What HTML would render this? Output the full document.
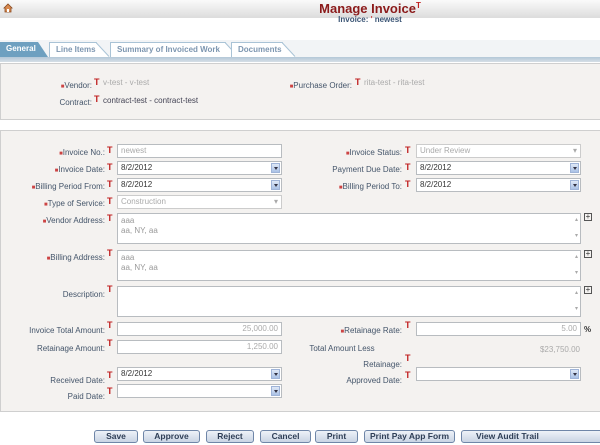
<!DOCTYPE html>
<html><head><style>
*{margin:0;padding:0;box-sizing:border-box}
body{width:600px;height:445px;background:#fff;font-family:"Liberation Sans",Tahoma,sans-serif;font-size:8px;color:#44556a;position:relative;overflow:hidden}
.a{position:absolute}
.hdr{left:0;top:0;width:600px;height:18px;background:linear-gradient(#fafafa,#dcdcdc)}
.title{left:300px;width:140px;top:1px;text-align:center;font-size:13px;font-weight:bold;color:#8b1a1a}
.sub{left:300px;width:140px;top:15px;text-align:center;font-size:8px;font-weight:bold;color:#3b5575}
.tabbar{left:0;top:40px;width:600px;height:17px;background:#f2f4f6}
.tab{top:42px;height:15px;background:#fff;border:1px solid #a9c3d6;border-bottom:none;font-weight:bold;color:#7d96b0;font-size:8px;line-height:13px;padding-left:6px}
.line{left:0;top:57px;width:600px;height:5px;background:linear-gradient(#b4c8d8,#d6dee6)}
.panel{left:0;width:600px;background:#f4f2f0;border:1px solid #cfcfcf;border-right:none}
.lbl{text-align:right;width:110px;font-size:8px;color:#44556a;line-height:10px}
.r{color:#c44;font-size:6px}
.in{height:14px;background:#fff;border:1px solid #b8bcc0;font-size:8px;line-height:12px;padding-left:3px;color:#333}
.g{color:#aaa}
.dd{position:absolute;right:1px;top:1px;width:9px;height:10px;background:linear-gradient(#dfe8f6,#aac2e6);border:1px solid #9fb4d8}
.dd:after{content:"";position:absolute;left:2px;top:3px;border:2px solid transparent;border-top:3px solid #334}
.sdd:after{content:"▾";position:absolute;right:3px;top:0;color:#aaa;font-size:8px}
.ta{height:31px;background:#fff;border:1px solid #b8bcc0;font-size:8px;line-height:10px;padding:2px 3px;color:#999}
.ta:after{content:"▴\A\A▾";white-space:pre;position:absolute;right:2px;top:2px;color:#aaa;font-size:6px;line-height:8px}
.plus{width:8px;height:8px;border:1px solid #555;font-size:8px;line-height:6px;text-align:center;color:#333}
.btn{top:430px;height:13px;border:1px solid #6f86a8;border-radius:3px;background:linear-gradient(#eef2f8,#c9d4e4);font-weight:bold;font-size:8.5px;line-height:11px;text-align:center;color:#2e3e56}
.t{color:#c02020;font-weight:bold;font-size:9px}
</style></head><body>
<div class="a hdr"></div>
<div class="a" style="left:3px;top:3px;width:10px;height:10px;">
<svg width="10" height="10"><path d="M1 5 L5 1 L9 5 L8 5 L8 9 L2 9 L2 5Z" fill="#d88a50" stroke="#8a4a20" stroke-width="0.8"/><rect x="4" y="6" width="2" height="3" fill="#fff"/></svg></div>
<div class="a title">Manage Invoice<span style="font-size:8px;vertical-align:top;color:#c02020">T</span></div>
<div class="a sub">Invoice: <span style="color:#c44">'</span> newest</div>

<div class="a tabbar"></div>
<div class="a" style="left:0;top:42px;width:48px;height:15px;background:#6ea0c0;clip-path:polygon(0 0,38px 0,48px 15px,0 15px);color:#fff;font-weight:bold;line-height:13px;padding-left:6px">General</div>
<div class="a tab" style="left:49px;width:48px">Line Items</div>
<div class="a" style="left:96px;top:42px;width:14px;height:15px;"><svg width="14" height="15"><path d="M0 0 L0 15 L13 15Z" fill="#fff"/><path d="M0 0.5 L13 14.5" stroke="#a9c3d6" fill="none"/></svg></div>
<div class="a tab" style="left:110px;width:116px">Summary of Invoiced Work</div>
<div class="a" style="left:225px;top:42px;width:14px;height:15px;"><svg width="14" height="15"><path d="M0 0 L0 15 L13 15Z" fill="#fff"/><path d="M0 0.5 L13 14.5" stroke="#a9c3d6" fill="none"/></svg></div>
<div class="a tab" style="left:231px;width:52px">Documents</div>
<div class="a" style="left:282px;top:42px;width:14px;height:15px;"><svg width="14" height="15"><path d="M0 0 L0 15 L13 15Z" fill="#fff"/><path d="M0 0.5 L13 14.5" stroke="#a9c3d6" fill="none"/></svg></div>
<div class="a line"></div>

<div class="a panel" style="top:63px;height:57px"></div>
<div class="a lbl" style="left:-18px;top:81px"><span class="r">■</span>Vendor:</div>
<div class="a t" style="left:94px;top:77px">T</div>
<div class="a g" style="left:103px;top:78px">v-test - v-test</div>
<div class="a lbl" style="left:-18px;top:98px">Contract:</div>
<div class="a t" style="left:94px;top:94px">T</div>
<div class="a" style="left:103px;top:96px;color:#445">contract-test - contract-test</div>
<div class="a lbl" style="left:242px;top:81px;width:110px"><span class="r">■</span>Purchase Order:</div>
<div class="a t" style="left:355px;top:77px">T</div>
<div class="a g" style="left:364px;top:78px">rita-test - rita-test</div>

<div class="a panel" style="top:130px;height:282px"></div>

<div class="a lbl" style="left:-5px;top:148px"><span class="r">■</span>Invoice No.:</div>
<div class="a lbl" style="left:-5px;top:165px"><span class="r">■</span>Invoice Date:</div>
<div class="a lbl" style="left:-5px;top:182px"><span class="r">■</span>Billing Period From:</div>
<div class="a lbl" style="left:-5px;top:199px"><span class="r">■</span>Type of Service:</div>
<div class="a lbl" style="left:-5px;top:216px"><span class="r">■</span>Vendor Address:</div>
<div class="a lbl" style="left:-5px;top:253px"><span class="r">■</span>Billing Address:</div>
<div class="a lbl" style="left:-5px;top:290px">Description:</div>
<div class="a lbl" style="left:-5px;top:326px">Invoice Total Amount:</div>
<div class="a lbl" style="left:-5px;top:344px">Retainage Amount:</div>
<div class="a lbl" style="left:-5px;top:376px">Received Date:</div>
<div class="a lbl" style="left:-5px;top:392px">Paid Date:</div>
<div class="a t" style="left:107px;top:142px;line-height:17px">T<br>T<br>T<br>T<br>T</div>
<div class="a t" style="left:107px;top:248px">T</div>
<div class="a t" style="left:107px;top:284px">T</div>
<div class="a t" style="left:107px;top:320px">T</div>
<div class="a t" style="left:107px;top:338px">T</div>
<div class="a t" style="left:107px;top:370px">T</div>
<div class="a t" style="left:107px;top:386px">T</div>

<div class="a in g" style="left:117px;top:144px;width:165px">newest</div>
<div class="a in" style="left:117px;top:161px;width:165px">8/2/2012<span class="dd"></span></div>
<div class="a in" style="left:117px;top:178px;width:165px">8/2/2012<span class="dd"></span></div>
<div class="a in g sdd" style="left:117px;top:195px;width:165px;border-color:#ccc">Construction</div>
<div class="a ta" style="left:117px;top:213px;width:464px">aaa<br>aa, NY, aa</div>
<div class="a ta" style="left:117px;top:250px;width:464px">aaa<br>aa, NY, aa</div>
<div class="a ta" style="left:117px;top:286px;width:464px"></div>
<div class="a plus" style="left:584px;top:213px">+</div>
<div class="a plus" style="left:584px;top:250px">+</div>
<div class="a plus" style="left:584px;top:286px">+</div>
<div class="a in g" style="left:117px;top:322px;width:165px;text-align:right;padding-right:3px">25,000.00</div>
<div class="a in g" style="left:117px;top:340px;width:165px;text-align:right;padding-right:3px">1,250.00</div>
<div class="a in" style="left:117px;top:367px;width:165px">8/2/2012<span class="dd"></span></div>
<div class="a in" style="left:117px;top:384px;width:165px"><span class="dd"></span></div>

<div class="a lbl" style="left:292px;top:148px"><span class="r">■</span>Invoice Status:</div>
<div class="a lbl" style="left:292px;top:165px">Payment Due Date:</div>
<div class="a lbl" style="left:292px;top:182px"><span class="r">■</span>Billing Period To:</div>
<div class="a lbl" style="left:292px;top:326px"><span class="r">■</span>Retainage Rate:</div>
<div class="a lbl" style="left:272px;top:344px;width:140px;text-align:center">Total Amount Less</div>
<div class="a lbl" style="left:292px;top:360px">Retainage:</div>
<div class="a lbl" style="left:292px;top:376px">Approved Date:</div>
<div class="a t" style="left:405px;top:142px;line-height:17px">T<br>T<br>T</div>
<div class="a t" style="left:405px;top:320px">T</div>
<div class="a t" style="left:405px;top:353px">T</div>
<div class="a t" style="left:405px;top:370px">T</div>
<div class="a in g sdd" style="left:416px;top:144px;width:165px;border-color:#ccc">Under Review</div>
<div class="a in" style="left:416px;top:161px;width:165px">8/2/2012<span class="dd"></span></div>
<div class="a in" style="left:416px;top:178px;width:165px">8/2/2012<span class="dd"></span></div>
<div class="a in g" style="left:416px;top:322px;width:165px;text-align:right;padding-right:3px">5.00</div>
<div class="a" style="left:584px;top:325px;font-weight:bold;color:#333">%</div>
<div class="a g" style="left:520px;top:345px;width:60px;text-align:right">$23,750.00</div>
<div class="a in" style="left:416px;top:367px;width:165px"><span class="dd"></span></div>

<div class="a btn" style="left:94px;width:44px">Save</div>
<div class="a btn" style="left:143px;width:57px">Approve</div>
<div class="a btn" style="left:206px;width:48px">Reject</div>
<div class="a btn" style="left:260px;width:51px">Cancel</div>
<div class="a btn" style="left:315px;width:43px">Print</div>
<div class="a btn" style="left:364px;width:91px">Print Pay App Form</div>
<div class="a btn" style="left:461px;width:150px;text-align:left;padding-left:14px">View Audit Trail</div>
</body></html>
